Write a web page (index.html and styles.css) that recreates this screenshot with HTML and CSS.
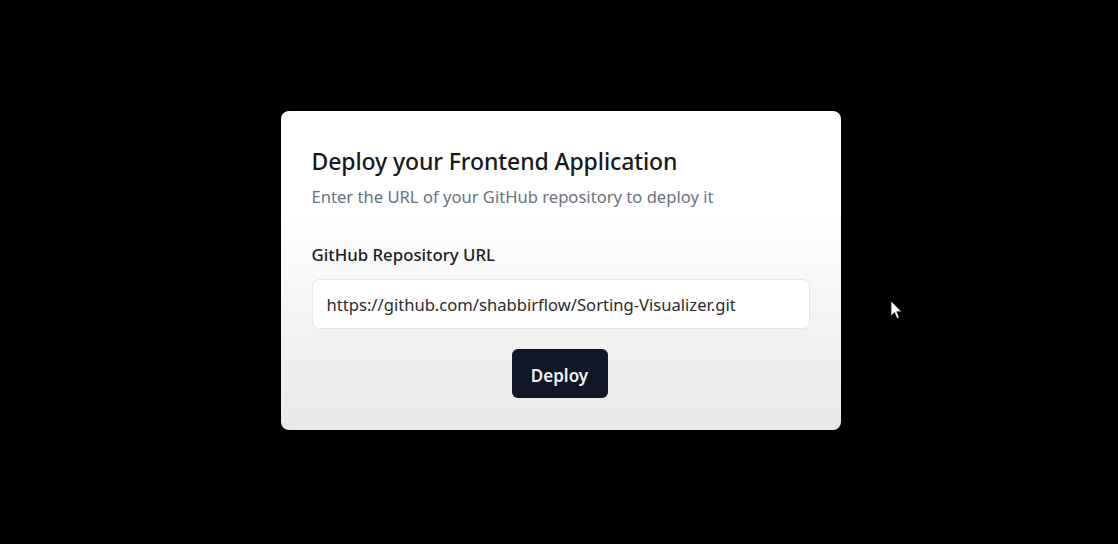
FILE: index.html
```html
<!DOCTYPE html>
<html>
<head>
<meta charset="utf-8">
<link rel="stylesheet" href="styles.css">
</head>
<body>
<main class="stage">
  <section class="card">
    <h1 class="title">Deploy your Frontend Application</h1>
    <p class="subtitle">Enter the URL of your GitHub repository to deploy it</p>
    <label class="label" for="repo">GitHub Repository URL</label>
    <input class="input" id="repo" type="text" value="https://github.com/shabbirflow/Sorting-Visualizer.git">
    <div class="actions"><button class="btn">Deploy</button></div>
  </section>
  <svg class="cursor" width="14" height="20" viewBox="0 0 14 20"><path d="M1 1 L1 16 L4.5 12.5 L7 18.5 L9.2 17.5 L6.8 11.8 L11.5 11.8 Z" fill="#fff" stroke="#222" stroke-width="0.8"/></svg>
</main>
</body>
</html>
```
FILE: styles.css
```css
* { box-sizing: border-box; }
html, body { margin: 0; padding: 0; background: #000; }
body { font-family: "Noto Sans", "Open Sans", sans-serif; }
.stage {
  position: relative;
  width: 1118px;
  height: 544px;
  display: flex;
  align-items: flex-start;
  justify-content: center;
  padding-top: 111px;
  padding-left: 3px;
}
.card {
  width: 560px;
  height: 319px;
  border-radius: 8px;
  background: linear-gradient(to bottom, #ffffff 30%, #e8e8e8 100%);
  padding: 34px 31px 31px;
  display: flex;
  flex-direction: column;
}
.title {
  margin: 0;
  font-size: 23px;
  line-height: 32px;
  font-weight: 500;
  color: #17181c;
  letter-spacing: -0.1px;
}
.subtitle {
  margin: 8px 0 0;
  font-size: 16.6px;
  line-height: 24px;
  color: #6b7280;
}
.label {
  margin-top: 34px;
  font-size: 16.8px;
  line-height: 24px;
  font-weight: 500;
  color: #1c1d22;
}
.input {
  margin-top: 12px;
  width: 498px;
  height: 50px;
  border: 1px solid #e6e7ea;
  border-radius: 7px;
  background: #fff;
  padding: 0 14px;
  font-family: inherit;
  font-size: 16.6px;
  color: #2a2b30;
  outline: none;
}
.actions {
  margin-top: 20px;
  display: flex;
  justify-content: center;
  padding-right: 2px;
}
.btn {
  width: 96px;
  height: 49px;
  border: none;
  border-radius: 6px;
  background: #111729;
  color: #eef0f4;
  font-family: inherit;
  font-size: 17px;
  font-weight: 600;
  padding: 4px 0 0;
}
.cursor {
  position: absolute;
  left: 890px;
  top: 300px;
}
```
